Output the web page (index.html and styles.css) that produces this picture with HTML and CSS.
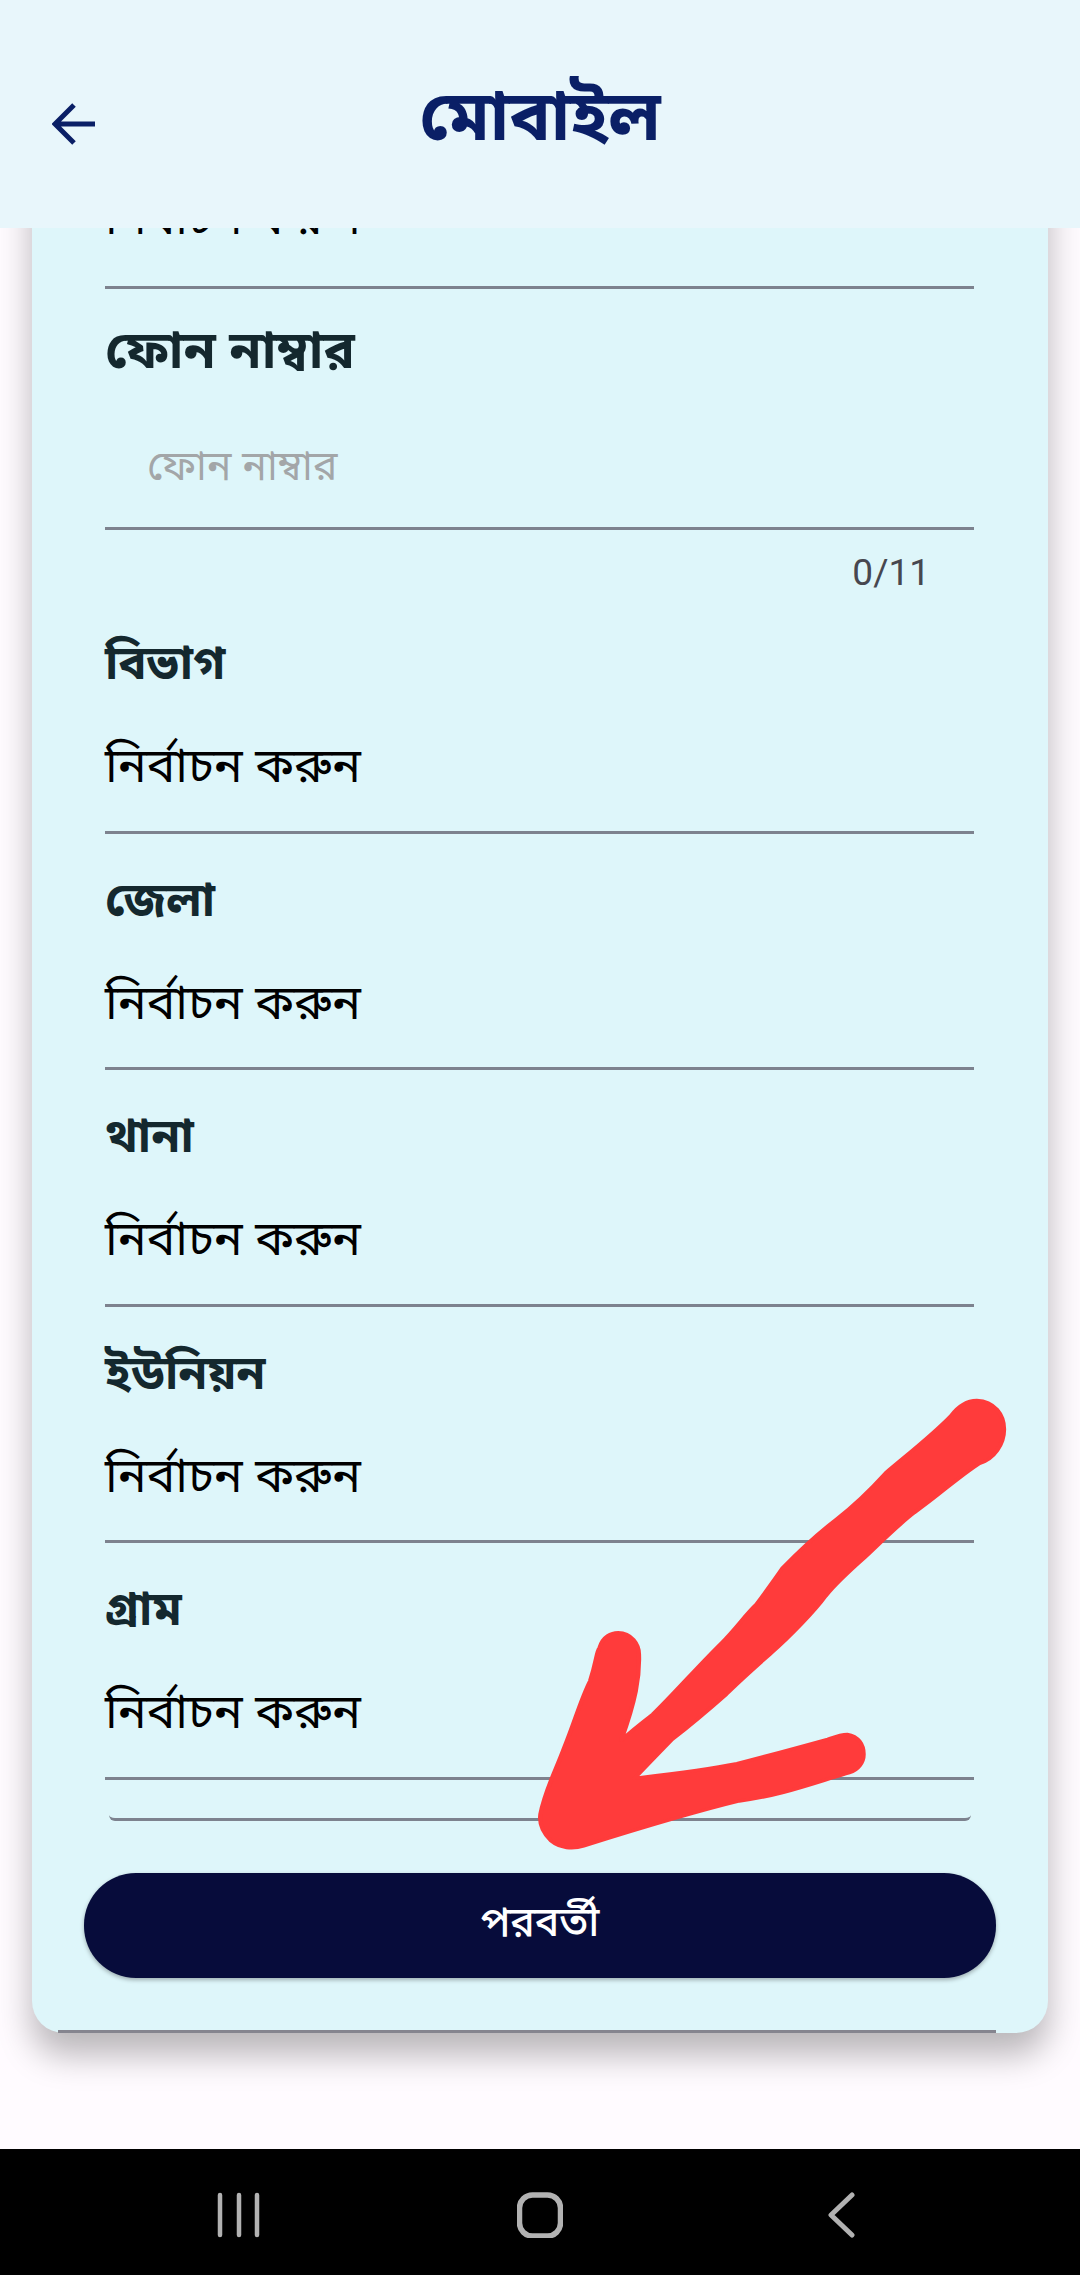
FILE: index.html
```html
<!DOCTYPE html>
<html lang="bn">
<head>
    <meta charset="UTF-8">
    <meta name="viewport" content="width=device-width, initial-scale=1.0">
    <title>মোবাইল</title>
    <link rel="stylesheet" href="styles.css">
</head>
<body>
    <header class="app-bar">
        <svg class="back-icon" viewBox="0 0 44 44" width="44" height="44">
            <path d="M43 22H4M22 3L3 22l19 19" fill="none" stroke="#0a1f66" stroke-width="5"/>
        </svg>
        <h1>মোবাইল</h1>
    </header>

    <main class="content">
        <div class="card">
            <div class="field first-field">
                <div class="value">নির্বাচন করুন</div>
            </div>
            <div class="field phone-field">
                <div class="label">ফোন নাম্বার</div>
                <div class="placeholder">ফোন নাম্বার</div>
            </div>
            <div class="counter">0/11</div>
            <div class="field">
                <div class="label">বিভাগ</div>
                <div class="value">নির্বাচন করুন</div>
            </div>
            <div class="field">
                <div class="label">জেলা</div>
                <div class="value">নির্বাচন করুন</div>
            </div>
            <div class="field">
                <div class="label">থানা</div>
                <div class="value">নির্বাচন করুন</div>
            </div>
            <div class="field">
                <div class="label">ইউনিয়ন</div>
                <div class="value">নির্বাচন করুন</div>
            </div>
            <div class="field">
                <div class="label">গ্রাম</div>
                <div class="value">নির্বাচন করুন</div>
            </div>
            <div class="empty-field"></div>
            <button class="next-btn">পরবর্তী</button>
            <div class="card-rule"></div>
        </div>
    </main>

    <nav class="nav-bar">
        <svg viewBox="0 0 44 46" width="44" height="46">
            <path d="M3 3v40M22 3v40M40 3v40" fill="none" stroke="#b2b2b2" stroke-width="4.5" stroke-linecap="round"/>
        </svg>
        <svg viewBox="0 0 46 46" width="46" height="46">
            <rect x="2.5" y="3" width="41" height="41" rx="13" fill="none" stroke="#b2b2b2" stroke-width="5.5"/>
        </svg>
        <svg viewBox="0 0 28 46" width="28" height="46">
            <path d="M25 3L4 23l21 20" fill="none" stroke="#b2b2b2" stroke-width="5" stroke-linecap="round" stroke-linejoin="round"/>
        </svg>
    </nav>

    <!-- hand drawn marker arrow on top of the screenshot -->
    <svg class="marker" viewBox="0 0 1560 1560" preserveAspectRatio="none">
        <path fill="#ff3b3b" stroke="#ff3b3b" stroke-width="10" stroke-linejoin="round" d="M1275 165C1295 130 1315 118 1335 118C1375 120 1398 160 1398 205C1398 250 1375 295 1340 308C1290 350 1250 400 1190 455C1150 495 1100 560 1075 590C1040 630 1010 665 985 705C960 750 900 830 860 875C830 910 790 955 755 1000C720 1040 680 1085 630 1135C600 1175 570 1215 543 1252C620 1240 700 1228 780 1208C840 1188 920 1160 990 1135C1005 1128 1020 1120 1035 1120C1060 1125 1073 1150 1073 1180C1073 1205 1060 1228 1040 1235C960 1265 880 1305 785 1320C690 1350 560 1400 425 1455C400 1465 370 1462 350 1440C330 1415 322 1390 325 1360C335 1290 360 1230 380 1160C405 1080 420 1010 440 960C455 900 455 870 462 860C470 825 490 815 505 815C535 815 553 850 553 880C555 950 545 1020 512 1138C535 1110 560 1085 585 1060C640 990 690 915 745 845C780 800 800 760 825 730C845 695 865 660 885 622C920 575 960 525 1010 475C1060 425 1090 385 1125 335C1170 285 1230 225 1275 165Z"/>
    </svg>
</body>
</html>
```

FILE: styles.css
```css
* {
    box-sizing: border-box;
}

body {
    margin: 0;
    width: 1080px;
    height: 2275px;
    display: flex;
    flex-direction: column;
    position: relative;
    overflow: hidden;
    background-color: #fffbff;
    font-family: "Noto Sans Bengali", "Lohit Bengali", "Noto Sans", "FreeSans", sans-serif;
}

.app-bar {
    height: 228px;
    flex: none;
    position: relative;
    z-index: 1;
    display: flex;
    align-items: center;
    justify-content: center;
    background-color: #e8f6fb;
}

.back-icon {
    position: absolute;
    left: 52px;
    top: 102px;
}

.app-bar h1 {
    margin: 18px 0 0;
    font-size: 69px;
    line-height: 80px;
    font-weight: 700;
    color: #0a1f66;
}

.content {
    flex: 1;
    overflow: hidden;
    padding: 0 32px;
}

.card {
    margin-top: -59px;
    height: 1864px;
    padding: 0 52px 0 26px;
    background-color: #def6fa;
    border-radius: 0 0 32px 32px;
    box-shadow: 0 22px 34px rgba(0, 0, 0, 0.28);
}

.field {
    height: 236.5px;
    margin: 0 22px 0 47px;
    border-bottom: 3px solid #7d828e;
}

.first-field {
    height: 120px;
    padding-top: 17px;
}

.phone-field {
    height: 241px;
}

.label {
    height: 134px;
    padding-top: 3px;
    font-size: 47px;
    line-height: 134px;
    font-weight: 700;
    color: #14282e;
}

.phone-field .label {
    height: 126px;
    font-size: 52px;
    line-height: 126px;
}

.value {
    padding-top: 3px;
    font-size: 48px;
    line-height: 72px;
    color: #000000;
}

.first-field .value {
    padding-top: 0;
}

.placeholder {
    padding: 3px 0 0 42px;
    margin-top: 16px;
    font-size: 41px;
    line-height: 72px;
    color: #a3a6a8;
}

.counter {
    height: 67px;
    margin-right: 66px;
    text-align: right;
    font-family: Roboto, sans-serif;
    font-size: 37px;
    line-height: 86px;
    color: #47474f;
}

.empty-field {
    height: 41px;
    margin: 0 25px 0 51px;
    border-bottom: 3px solid #7d828e;
    border-radius: 0 0 6px 6px;
}

.next-btn {
    display: block;
    width: 912px;
    height: 105px;
    margin: 52px 0 52px 26px;
    border: none;
    border-radius: 52px;
    background-color: #070c3b;
    color: #ffffff;
    font-family: inherit;
    font-size: 41px;
    font-weight: 500;
    box-shadow: 0 2px 4px rgba(0, 0, 0, 0.3);
}

.card-rule {
    height: 3px;
    background-color: #85858f;
}

.nav-bar {
    height: 126px;
    flex: none;
    position: relative;
    display: grid;
    grid-template-columns: repeat(3, 301px);
    justify-content: center;
    justify-items: center;
    align-items: center;
    padding-top: 6px;
    background-color: #000000;
}

.marker {
    position: absolute;
    left: 400px;
    top: 1361px;
    width: 674px;
    height: 520px;
    z-index: 2;
}
```
